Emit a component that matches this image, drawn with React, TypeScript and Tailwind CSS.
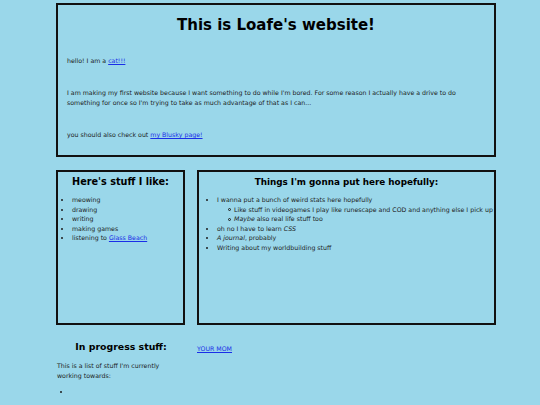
import React from "react";

function CircleItem({ children }: { children: React.ReactNode }) {
  return (
    <li className="relative list-none">
      <span className="absolute left-[-6px] top-[3.5px] h-[3px] w-[3px] rounded-full border-[0.7px] border-[#1c1c1c]" />
      {children}
    </li>
  );
}

export default function App() {
  return (
    <div className="w-[540px] h-[405px] overflow-hidden bg-[#9ad7ea] text-[#1c1c1c] font-['DejaVu_Sans',sans-serif]">
      <div className="ml-[56px] w-[440px] pt-[3px]">
        <div className="h-[154px] border-2 border-[#111] pl-[9px] pr-[9px]">
          <h1 className="pt-[8px] text-center text-[15px] leading-[24px] font-bold text-black">
            This is Loafe's website!
          </h1>
          <p className="mt-[19px] text-[6.25px] leading-[10px]">
            hello! I am a <a href="#" className="text-[#1a2ee8] underline">cat!!!</a>
          </p>
          <p className="mt-[22px] text-[6.25px] leading-[10px]">
            I am making my first website because I want something to do while I'm bored. For some reason I actually have a drive to do something for once so I'm trying to take as much advantage of that as I can...
          </p>
          <p className="mt-[22px] text-[6.25px] leading-[10px]">
            you should also check out <a href="#" className="text-[#1a2ee8] underline">my Blusky page!</a>
          </p>
        </div>

        <div className="mt-[13px] flex gap-[12px]">
          <div className="w-[129px] h-[155px] border-2 border-[#111]">
            <h2 className="pt-[2px] text-center text-[9.7px] leading-[16px] font-bold text-black">Here's stuff I like:</h2>
            <ul className="mt-[5px] list-disc pl-[14px] text-[6.25px] leading-[9.6px]">
              <li>meowing</li>
              <li>drawing</li>
              <li>writing</li>
              <li>making games</li>
              <li>
                listening to <a href="#" className="text-[#1a2ee8] underline">Glass Beach</a>
              </li>
            </ul>
          </div>
          <div className="w-[299px] h-[155px] border-2 border-[#111]">
            <h2 className="pt-[2px] text-center text-[8.8px] leading-[16px] font-bold text-black">Things I'm gonna put here hopefully:</h2>
            <ul className="mt-[5px] list-disc pl-[18px] text-[6.25px] leading-[9.6px]">
              <li>
                I wanna put a bunch of weird stats here hopefully
                <ul className="pl-[17px]">
                  <CircleItem>
                    <span className="whitespace-nowrap">Like stuff in videogames I play like runescape and COD and anything else I pick up</span>
                  </CircleItem>
                  <CircleItem>
                    <em>Maybe</em> also real life stuff too
                  </CircleItem>
                </ul>
              </li>
              <li>oh no I have to learn <em>CSS</em></li>
              <li><em>A journal</em>, probably</li>
              <li>Writing about my worldbuilding stuff</li>
            </ul>
          </div>
        </div>

        <div className="mt-[14px] flex gap-[12px]">
          <div className="w-[129px] pl-[1px]">
            <h2 className="text-center text-[9.4px] leading-[16px] font-bold text-black">In progress stuff:</h2>
            <p className="mt-[6px] text-[6.25px] leading-[10px]">
              This is a list of stuff I'm currently working towards:
            </p>
            <ul className="mt-[6px] list-disc pl-[14px] text-[6.25px] leading-[10px]">
              <li>&nbsp;</li>
            </ul>
          </div>
          <div className="pt-[5px] text-[6.25px] leading-[10px]">
            <a href="#" className="text-[#1a2ee8] underline">YOUR MOM</a>
          </div>
        </div>
      </div>
    </div>
  );
}
